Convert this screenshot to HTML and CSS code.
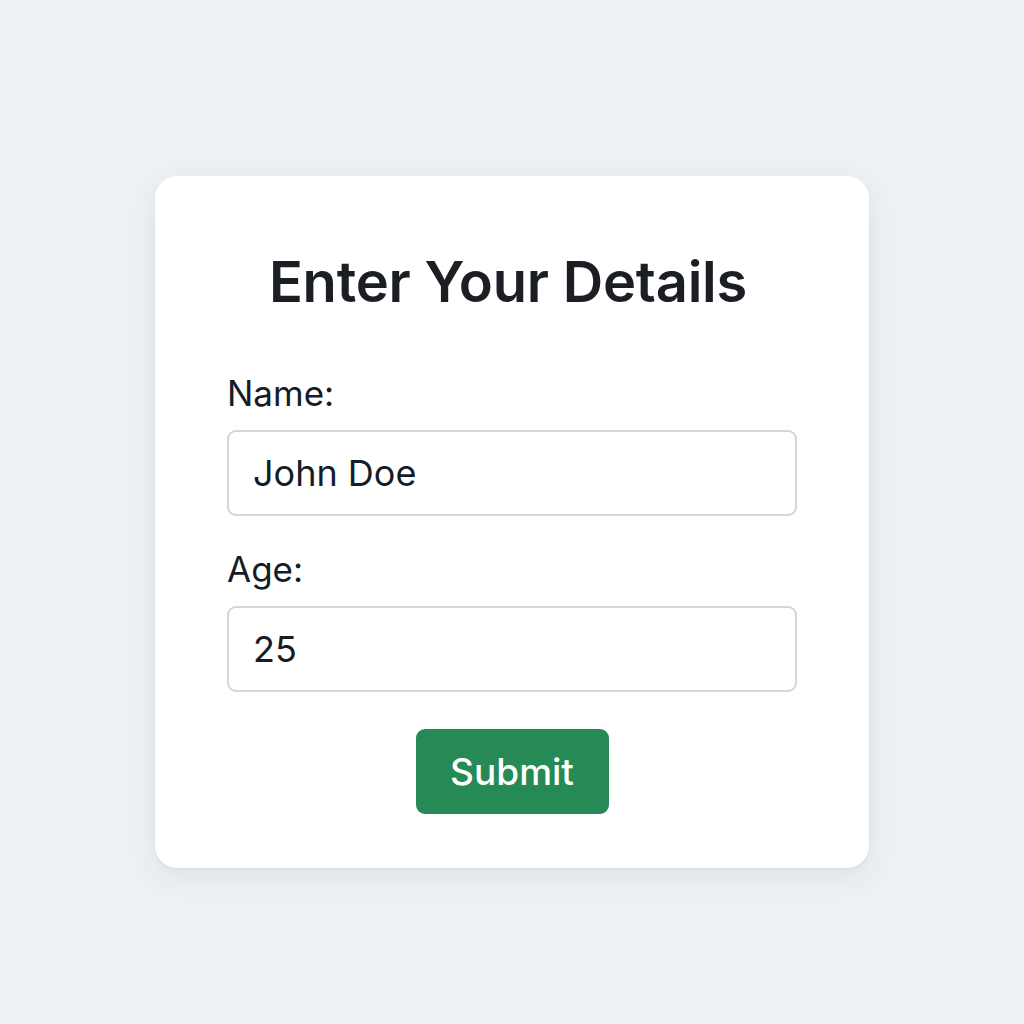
FILE: index.html
```html
<!DOCTYPE html>
<html lang="en">
<head>
<meta charset="utf-8">
<title>Enter Your Details</title>
<link rel="stylesheet" href="styles.css">
</head>
<body>
<main class="page">
  <form class="card">
    <h1 class="title">Enter Your Details</h1>
    <div class="field">
      <label class="label" for="name">Name:</label>
      <input class="input" id="name" type="text" value="John Doe">
    </div>
    <div class="field">
      <label class="label" for="age">Age:</label>
      <input class="input" id="age" type="text" value="25">
    </div>
    <div class="actions">
      <button class="button" type="button">Submit</button>
    </div>
  </form>
</main>
</body>
</html>
```
FILE: styles.css
```css
* { box-sizing: border-box; }
html, body { margin: 0; padding: 0; }
body {
  background: #eef1f4;
  font-family: Inter, "Noto Sans", sans-serif;
  color: #141c28;
}
.page {
  width: 1024px;
  height: 1024px;
  display: flex;
  align-items: flex-start;
  justify-content: center;
  padding-top: 176px;
}
.card {
  width: 714px;
  height: 692px;
  background: #ffffff;
  border-radius: 22px;
  box-shadow: 0 8px 30px rgba(30, 45, 70, 0.08), 0 1px 3px rgba(30, 45, 70, 0.05);
  padding: 71px 72px 0;
  display: flex;
  flex-direction: column;
}
.title {
  margin: 0 0 55px;
  padding-right: 8px;
  font-size: 56px;
  line-height: 70px;
  font-weight: 600;
  text-align: center;
  color: #1b1f24;
  letter-spacing: -0.2px;
}
.field {
  display: flex;
  flex-direction: column;
  margin-bottom: 32px;
}
.label {
  font-size: 35px;
  line-height: 42px;
  font-weight: 400;
  color: #141c28;
  margin-bottom: 16px;
}
.input {
  width: 100%;
  height: 86px;
  border: 2px solid #d0d7e0;
  border-radius: 9px;
  padding: 0 24px;
  font-family: Inter, "Noto Sans", sans-serif;
  font-size: 36px;
  color: #141c28;
  background: #fff;
  outline: none;
}
.actions {
  display: flex;
  justify-content: center;
  margin-top: 5px;
}
.button {
  width: 193px;
  height: 85px;
  border: none;
  border-radius: 9px;
  background: #258a55;
  color: #ffffff;
  font-family: Inter, "Noto Sans", sans-serif;
  font-size: 37px;
  font-weight: 500;
}
```
